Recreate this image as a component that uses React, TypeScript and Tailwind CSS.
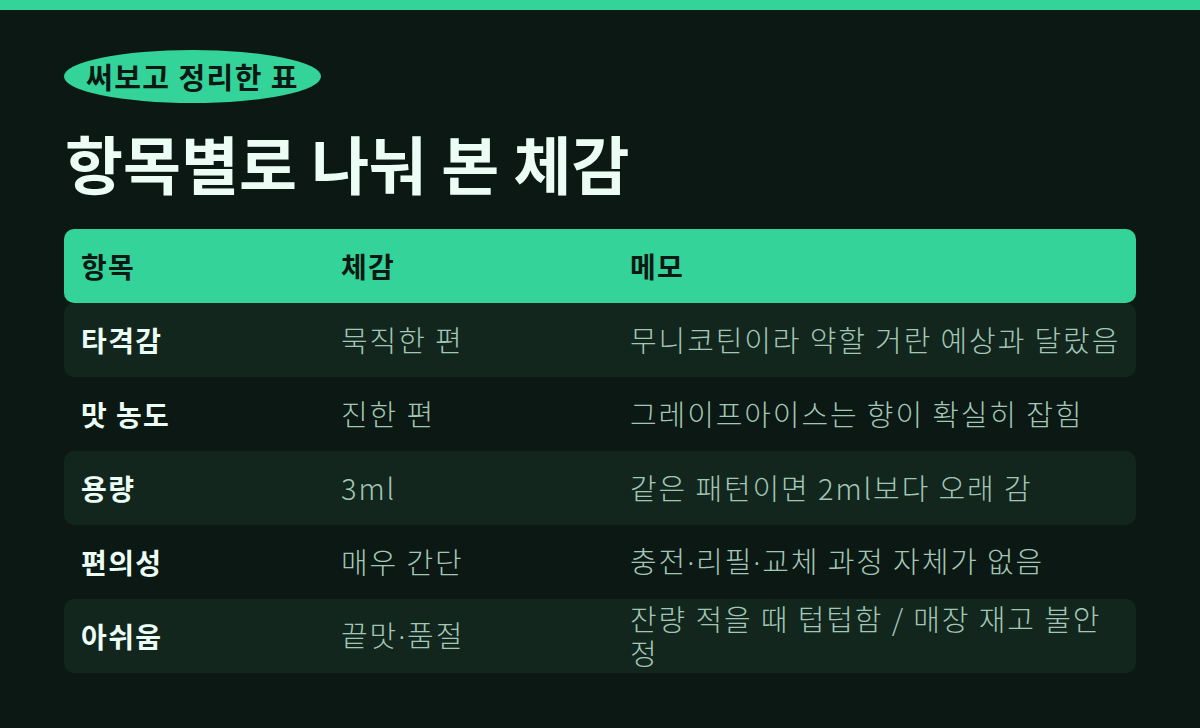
const rows = [
  { item: "타격감", feel: "묵직한 편", memo: "무니코틴이라 약할 거란 예상과 달랐음", shaded: true },
  { item: "맛 농도", feel: "진한 편", memo: "그레이프아이스는 향이 확실히 잡힘", shaded: false },
  { item: "용량", feel: "3ml", memo: "같은 패턴이면 2ml보다 오래 감", shaded: true },
  { item: "편의성", feel: "매우 간단", memo: "충전·리필·교체 과정 자체가 없음", shaded: false },
  { item: "아쉬움", feel: "끝맛·품절", memo: "잔량 적을 때 텁텁함 / 매장 재고 불안정", shaded: true },
]

// middle dots render narrow like the reference when taken from a latin font
function Dotted({ text }: { text: string }) {
  const parts = text.split("·")
  return (
    <>
      {parts.map((p, i) => (
        <span key={i}>
          {i > 0 && <span style={{ fontFamily: '"Noto Sans", sans-serif' }}>·</span>}
          {p}
        </span>
      ))}
    </>
  )
}

export default function App() {
  return (
    <div
      className="w-[1200px] h-[728px] overflow-hidden bg-[#0b1813] flex flex-col"
      style={{ fontFamily: '"Noto Sans CJK KR", "Noto Sans", sans-serif' }}
    >
      {/* top accent bar */}
      <div className="h-[10px] bg-[#34d399] shrink-0" />

      <div className="px-[64px] pt-[40px] flex flex-col">
        {/* badge */}
        <div className="self-start h-[53px] w-[257px] rounded-[50%] bg-[#34d399] flex items-center justify-center">
          <span className="text-[29px] font-bold text-[#0b1813] leading-none tracking-[0.05em]">써보고 정리한 표</span>
        </div>

        {/* title */}
        <h1 className="mt-[21px] text-[63px] font-bold text-[#ecfdf5] leading-[1.2] pl-[1px]">
          항목별로 나눠 본 체감
        </h1>

        {/* table */}
        <div className="mt-[29px] flex flex-col">
          <div className="h-[74px] grid grid-cols-[260px_289px_1fr] items-center bg-[#34d399] rounded-[10px] text-[28px] font-bold text-[#0b1813] tracking-[0.04em]">
            <div className="px-[17px]">항목</div>
            <div className="px-[17px]">체감</div>
            <div className="px-[17px]">메모</div>
          </div>
          {rows.map((r) => (
            <div
              key={r.item}
              className={
                "h-[74px] grid grid-cols-[260px_289px_1fr] items-center rounded-[10px] text-[29px] leading-[1.15] " +
                (r.shaded ? "bg-[#12261e]" : "")
              }
            >
              <div className="px-[17px] font-bold text-[#ecfdf5] text-[28px] tracking-[0.05em]">{r.item}</div>
              <div className="px-[17px] font-light text-[#a3c7b6] tracking-[0.065em]">
                <Dotted text={r.feel} />
              </div>
              <div className="pl-[17px] pr-[10px] font-light text-[#a3c7b6] tracking-[0.065em]">
                <Dotted text={r.memo} />
              </div>
            </div>
          ))}
        </div>
      </div>
    </div>
  )
}
